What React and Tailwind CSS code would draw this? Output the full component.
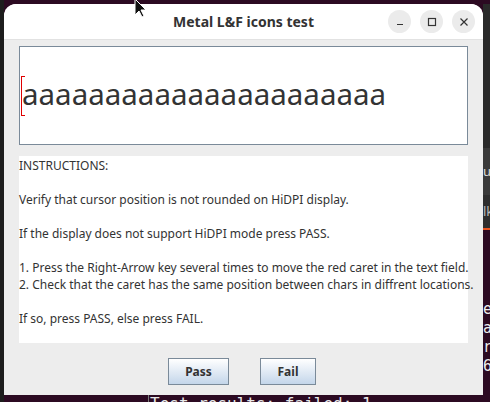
import React from 'react';

const UI = { fontFamily: '"Noto Sans", "Open Sans", sans-serif' };
const MONO = { fontFamily: '"DejaVu Sans Mono", "Liberation Mono", monospace' };

function WinButton({ children }) {
  return (
    <div className="w-[23px] h-[23px] rounded-full bg-[#ebebeb] flex items-center justify-center text-[#333]">
      {children}
    </div>
  );
}

function MetalButton({ label, w }) {
  return (
    <button
      className={`${w} h-[27px] border border-[#7a8a99] bg-gradient-to-b from-[#ffffff] to-[#c4d6ea] text-[12px] font-bold text-[#333]`}
      style={UI}
    >
      {label}
    </button>
  );
}

export default function App() {
  const line = 'a'.repeat(22);
  return (
    <div className="relative w-[490px] h-[402px] overflow-hidden bg-[#1d1d1d]">
      {/* terminal behind */}
      <div className="absolute left-[4px] top-0 right-0 bottom-0 bg-[#2c0a22]" />
      <div className="absolute left-[483px] top-[4px] w-[7px] h-[144px] bg-[#2a2a2a]" />
      <div className="absolute left-[483px] top-[148px] w-[7px] h-[47px] bg-[#3a3a3a] text-[#ddd] text-[13px] leading-[47px] overflow-hidden" style={UI}>u</div>
      <div className="absolute left-[483px] top-[195px] w-[7px] h-[33px] bg-[#2e2e2e] text-[#bbb] text-[13px] leading-[33px] overflow-hidden" style={UI}>lk</div>
      <div className="absolute left-[483px] top-[228px] w-[7px] h-[2px] bg-[#e95420]" />
      <div className="absolute left-[483px] top-[300px] w-[7px] text-[#eee] text-[15px] leading-[19px] overflow-hidden" style={MONO}>
        <div>e</div><div>a</div><div>r</div><div>6</div>
      </div>
      <div className="absolute left-[148px] top-[395px] h-[7px] w-px bg-[#777]" />
      <div className="absolute left-[150px] top-[392px] text-[#e8e8e8] text-[16px] whitespace-pre" style={MONO}>
        Test results: failed: 1
      </div>

      {/* window */}
      <div className="absolute left-[4px] top-[4px] w-[479px] h-[391px] bg-[#ededed] rounded-t-[12px] overflow-hidden flex flex-col">
        <div className="h-[36px] bg-white border-b border-[#e2e2e2] flex items-center relative shrink-0">
          <div className="absolute inset-0 flex items-center justify-center text-[14px] font-bold text-[#333]" style={UI}>
            Metal L&amp;F icons test
          </div>
          <div className="ml-auto mr-[8px] flex gap-[9px] relative">
            <WinButton>
              <svg width="10" height="10" viewBox="0 0 10 10"><path d="M2 7.5h6" stroke="#333" strokeWidth="1.2" /></svg>
            </WinButton>
            <WinButton>
              <svg width="10" height="10" viewBox="0 0 10 10"><rect x="1.5" y="1.5" width="7" height="7" fill="none" stroke="#333" strokeWidth="1.2" /></svg>
            </WinButton>
            <WinButton>
              <svg width="10" height="10" viewBox="0 0 10 10"><path d="M1.5 1.5l7 7M8.5 1.5l-7 7" stroke="#333" strokeWidth="1.2" /></svg>
            </WinButton>
          </div>
        </div>

        <div className="px-[15px] pt-[6px] flex flex-col">
          <div className="h-[99px] bg-white border border-[#7a8a99] flex items-center relative">
            <div className="relative pl-[2px] text-[29.5px] leading-none text-[#333] -mt-[4px]" style={UI}>
              <span className="absolute left-[1px] top-[-3px] w-[4px] h-[40px] border border-r-0 border-[#e00000]" />
              {line}
            </div>
          </div>

          <div className="mt-[11px] h-[187px] bg-white pt-[1px] text-[12px] leading-[17px] text-[#333] whitespace-nowrap" style={UI}>
            <div>INSTRUCTIONS:</div>
            <div>&nbsp;</div>
            <div>Verify that cursor position is not rounded on HiDPI display.</div>
            <div>&nbsp;</div>
            <div>If the display does not support HiDPI mode press PASS.</div>
            <div>&nbsp;</div>
            <div>1. Press the Right-Arrow key several times to move the red caret in the text field.</div>
            <div>2. Check that the caret has the same position between chars in diffrent locations.</div>
            <div>&nbsp;</div>
            <div>If so, press PASS, else press FAIL.</div>
          </div>

          <div className="flex justify-center gap-[31px] mt-[15px] -ml-[3px]">
            <MetalButton label="Pass" w="w-[61px]" />
            <MetalButton label="Fail" w="w-[56px]" />
          </div>
        </div>
      </div>

      {/* mouse pointer */}
      <svg className="absolute left-[134px] top-[-2px]" width="14" height="22" viewBox="0 0 14 22">
        <path d="M1 1v16l4-4 3 6 2-1-3-6h5z" fill="#111" stroke="#fff" strokeWidth="1" />
      </svg>
    </div>
  );
}
